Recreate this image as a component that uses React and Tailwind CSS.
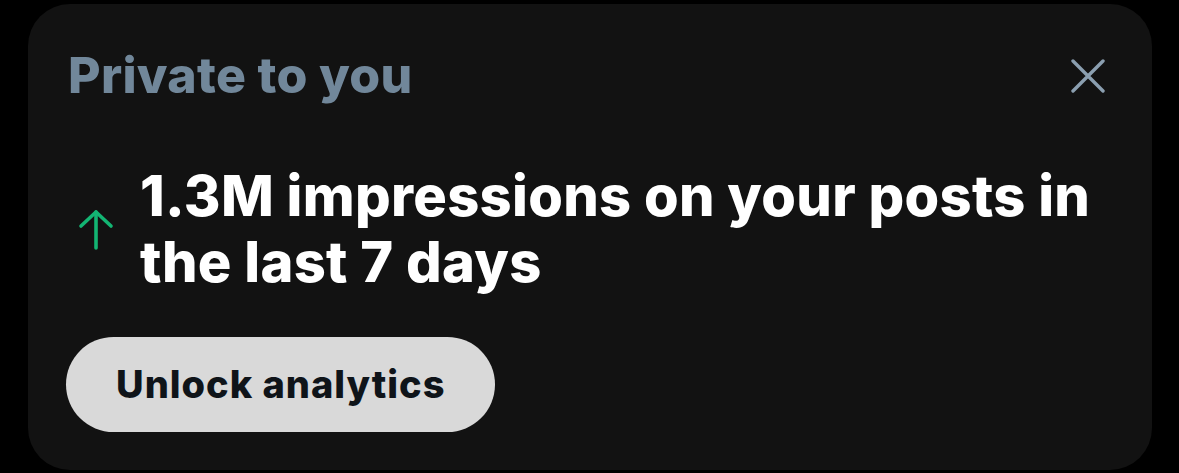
import React from 'react'

function ArrowUp() {
    return (
        <svg width="36" height="42" viewBox="0 0 36 42" fill="none" stroke="#13b573" strokeWidth="3.6" strokeLinecap="round" strokeLinejoin="round">
            <path d="M18 40V4" />
            <path d="M3 18L18 4l15 14" />
        </svg>
    )
}

function CloseIcon() {
    return (
        <svg width="34" height="34" viewBox="0 0 34 34" fill="none" stroke="#8b9fb0" strokeWidth="3.4" strokeLinecap="round">
            <path d="M2 2l30 30M32 2L2 32" />
        </svg>
    )
}

export default function App() {
    return (
        <div className="w-[1179px] h-[473px] bg-black pt-[4px] pl-[28px]" style={{ fontFamily: 'Inter, "Noto Sans", sans-serif' }}>
            <div className="w-[1124px] h-[466px] bg-[#121212] rounded-[42px] px-[40px] pt-[41px]">
                <div className="flex items-start justify-between">
                    <h2 className="text-[50px] leading-[60px] font-extrabold text-[#71879a] tracking-[0.3px]">
                        Private to you
                    </h2>
                    <button className="mt-[14px] mr-[7px]">
                        <CloseIcon />
                    </button>
                </div>
                <div className="flex items-center mt-[58px]">
                    <div className="w-[72px] flex justify-start pl-[10px]">
                        <ArrowUp />
                    </div>
                    <p className="text-[56px] leading-[66px] font-extrabold text-white tracking-[0.3px] max-w-[972px]">
                        1.3M impressions on your posts in the last 7 days
                    </p>
                </div>
                <button className="mt-[42px] -ml-[2px] h-[95px] px-[50px] rounded-full bg-[#d9d9d9] text-[#0f1419] text-[38px] font-extrabold tracking-[1px]">
                    Unlock analytics
                </button>
            </div>
        </div>
    )
}
